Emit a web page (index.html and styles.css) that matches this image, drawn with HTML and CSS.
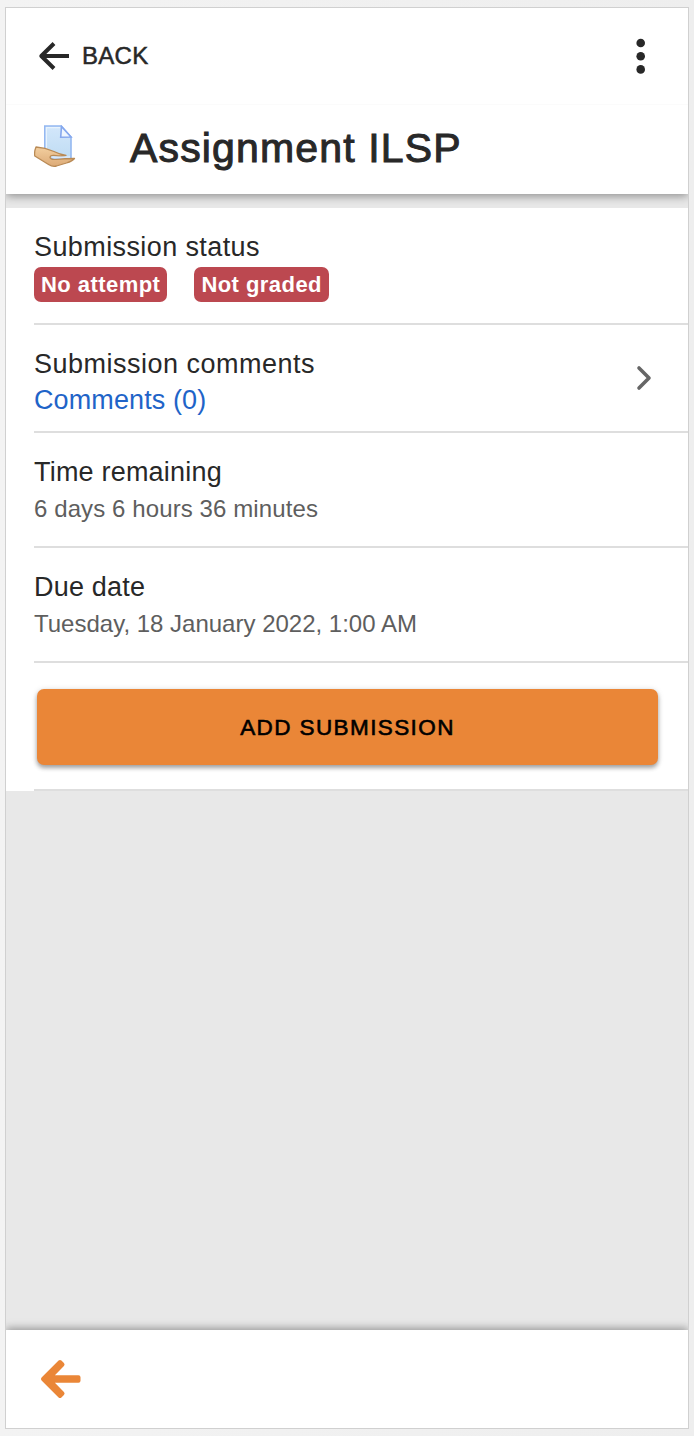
FILE: index.html
```html
<!DOCTYPE html>
<html lang="en">
<head>
    <meta charset="UTF-8">
    <meta name="viewport" content="width=device-width, initial-scale=1.0">
    <title>Assignment ILSP</title>
    <link rel="stylesheet" href="styles.css">
</head>
<body>
    <div class="phone">
        <header class="header">
            <div class="toolbar">
                <a class="back">
                    <svg width="32" height="30" viewBox="0 0 32 30" fill="none" stroke="#282828" stroke-width="4" stroke-linejoin="round">
                        <path d="M16 2.500L3.300 15 16 27.500M4 15h27"/>
                    </svg>
                    <span>BACK</span>
                </a>
                <svg class="dots" width="10" height="36" viewBox="0 0 10 36" fill="#282828">
                    <circle cx="4.700" cy="5" r="4.300"/>
                    <circle cx="4.700" cy="18.200" r="4.300"/>
                    <circle cx="4.700" cy="31.400" r="4.300"/>
                </svg>
            </div>
            <div class="title">
                <svg width="42" height="42" viewBox="0 0 42 42">
                    <defs>
                        <linearGradient id="paper" x1="0" y1="0" x2="0" y2="1">
                            <stop offset="0" stop-color="#d3e7fb"/>
                            <stop offset="1" stop-color="#bfdcf3"/>
                        </linearGradient>
                        <linearGradient id="hand" x1="0" y1="0" x2="0" y2="1">
                            <stop offset="0" stop-color="#f3cf9f"/>
                            <stop offset="1" stop-color="#dcaa77"/>
                        </linearGradient>
                    </defs>
                    <path d="M10.800 1h16.500l9.700 11v22H10.800z" fill="url(#paper)" stroke="#94b8f1" stroke-width="1.600"/>
                    <path d="M12.400 24V2.600H26" fill="none" stroke="#e8f3fd" stroke-width="1.200"/>
                    <path d="M27.500 1.500l-.8 10.700 10.300-.2z" fill="#eef6fe" stroke="#86a8ee" stroke-width="1.600"/>
                    <path d="M2 22q9 .5 18 4.500 6 3 12 4-3 1-12 0-4-.3-4 2 1 2.500 6 1.800 8-.8 18.500-.8-2 2.500-8 4.500l-10 3q-4 1-8-1.500L.8 31Q0 27 2 22z" fill="url(#hand)" stroke="#b98a55" stroke-width="1.300" stroke-linejoin="round"/>
                    <path d="M17 31.500q2-.5 8 0 6 0 11-.5v1.800l-15 .6q-3 .3-4-1.900z" fill="#d8e8fa"/>
                </svg>
                <h1>Assignment ILSP</h1>
            </div>
        </header>

        <main class="content">
            <div class="item status">
                <h2>Submission status</h2>
                <div class="badges">
                    <span class="badge">No attempt</span>
                    <span class="badge">Not graded</span>
                </div>
            </div>
            <div class="item comments">
                <div class="comments-text">
                    <h2>Submission comments</h2>
                    <a class="link">Comments (0)</a>
                </div>
                <svg width="16" height="26" viewBox="0 0 16 26" fill="none" stroke="#666" stroke-width="3.600" stroke-linecap="round" stroke-linejoin="round">
                    <path d="M3 3l10 10L3 23"/>
                </svg>
            </div>
            <div class="item detail">
                <h2 class="tight">Time remaining</h2>
                <p class="time">6 days 6 hours 36 minutes</p>
            </div>
            <div class="item detail">
                <h2 class="tight">Due date</h2>
                <p>Tuesday, 18 January 2022, 1:00 AM</p>
            </div>
            <div class="item action">
                <button class="add">ADD SUBMISSION</button>
            </div>
        </main>

        <footer class="footer">
            <svg width="42" height="40" viewBox="0 0 42 40" fill="#ea8637" stroke="#ea8637" stroke-width="4" stroke-linejoin="round">
                <path d="M20 3L3 20l17 17 2.500-2.500L10 21.700h28.500v-3.400H10L22.500 5.500z"/>
            </svg>
        </footer>
    </div>
</body>
</html>
```

FILE: styles.css
```css
* {
    box-sizing: border-box;
}

body {
    margin: 0;
    padding: 7px 5px 8px;
    height: 1436px;
    background: linear-gradient(to right, #f3f3f3, #eee);
    font-family: "Liberation Sans", Arial, sans-serif;
    color: #282828;
}

h1, h2, p {
    margin: 0;
    font-weight: normal;
    white-space: nowrap;
}

svg {
    display: block;
    flex-shrink: 0;
}

.phone {
    display: flex;
    flex-direction: column;
    width: 684px;
    height: 1422px;
    border: 1px solid #d0d0d0;
    background: #e8e8e8;
    overflow: hidden;
}

/* header */
.header {
    height: 186px;
    background: #fff;
    box-shadow: 0 2px 9px rgba(0, 0, 0, 0.4);
}

.toolbar {
    display: flex;
    justify-content: space-between;
    align-items: center;
    height: 97px;
    padding: 0 42px 1px 32px;
    border-bottom: 1px solid #fbfbfb;
}

.back {
    display: flex;
    align-items: center;
    gap: 12px;
    font-size: 24px;
    letter-spacing: 0.3px;
    -webkit-text-stroke: 0.5px #282828;
}

.title {
    display: flex;
    align-items: center;
    height: 89px;
    padding-left: 28px;
    gap: 54px;
}

.title svg {
    margin-top: -7px;
}

.title h1 {
    margin-top: -2px;
    font-size: 41px;
    letter-spacing: 1.15px;
    -webkit-text-stroke: 1px #282828;
}

/* list */
.content {
    flex: 1;
    padding-top: 14px;
}

.item {
    position: relative;
    padding-left: 28px;
    background: #fff;
}

.item::after {
    content: "";
    position: absolute;
    left: 28px;
    right: 0;
    bottom: 0;
    height: 2px;
    background: #dedede;
}

.item h2 {
    font-size: 27px;
    line-height: 36px;
    letter-spacing: 0.4px;
}

.item .tight {
    letter-spacing: 0.2px;
}

.status {
    height: 117px;
    padding-top: 21px;
}

.badges {
    display: flex;
    gap: 27px;
    margin-top: 2px;
}

.badge {
    height: 35px;
    padding: 0 7px;
    border-radius: 7px;
    background: #bc4850;
    color: #fff;
    font-size: 22px;
    font-weight: bold;
    line-height: 35px;
    letter-spacing: 0.45px;
}

.comments {
    display: flex;
    justify-content: space-between;
    height: 108px;
    padding: 21px 36px 0 28px;
}

.comments svg {
    margin-top: 19px;
}

.comments h2 {
    letter-spacing: 0.5px;
}

.link {
    display: block;
    font-size: 27px;
    line-height: 36px;
    letter-spacing: 0.1px;
    color: #1f64c8;
}

.detail {
    height: 115px;
    padding-top: 21px;
}

.detail p {
    font-size: 24px;
    line-height: 37px;
    color: #5e5e5e;
}

.detail .time {
    letter-spacing: 0.1px;
}

.action {
    height: 128px;
    padding: 26px 30px 0 31px;
}

.add {
    display: block;
    width: 100%;
    height: 76px;
    padding: 2px 0 0;
    border: 0;
    border-radius: 7px;
    background: #ea8637;
    box-shadow: 0 3px 4px rgba(0, 0, 0, 0.3), 0 1px 6px rgba(0, 0, 0, 0.15);
    font-family: inherit;
    font-size: 22.5px;
    letter-spacing: 1.4px;
    color: #000;
    -webkit-text-stroke: 0.6px #000;
}

/* bottom bar */
.footer {
    display: flex;
    align-items: center;
    height: 98px;
    padding: 0 0 1px 34px;
    background: #fff;
    box-shadow: 0 -2px 8px rgba(0, 0, 0, 0.35);
}
```
